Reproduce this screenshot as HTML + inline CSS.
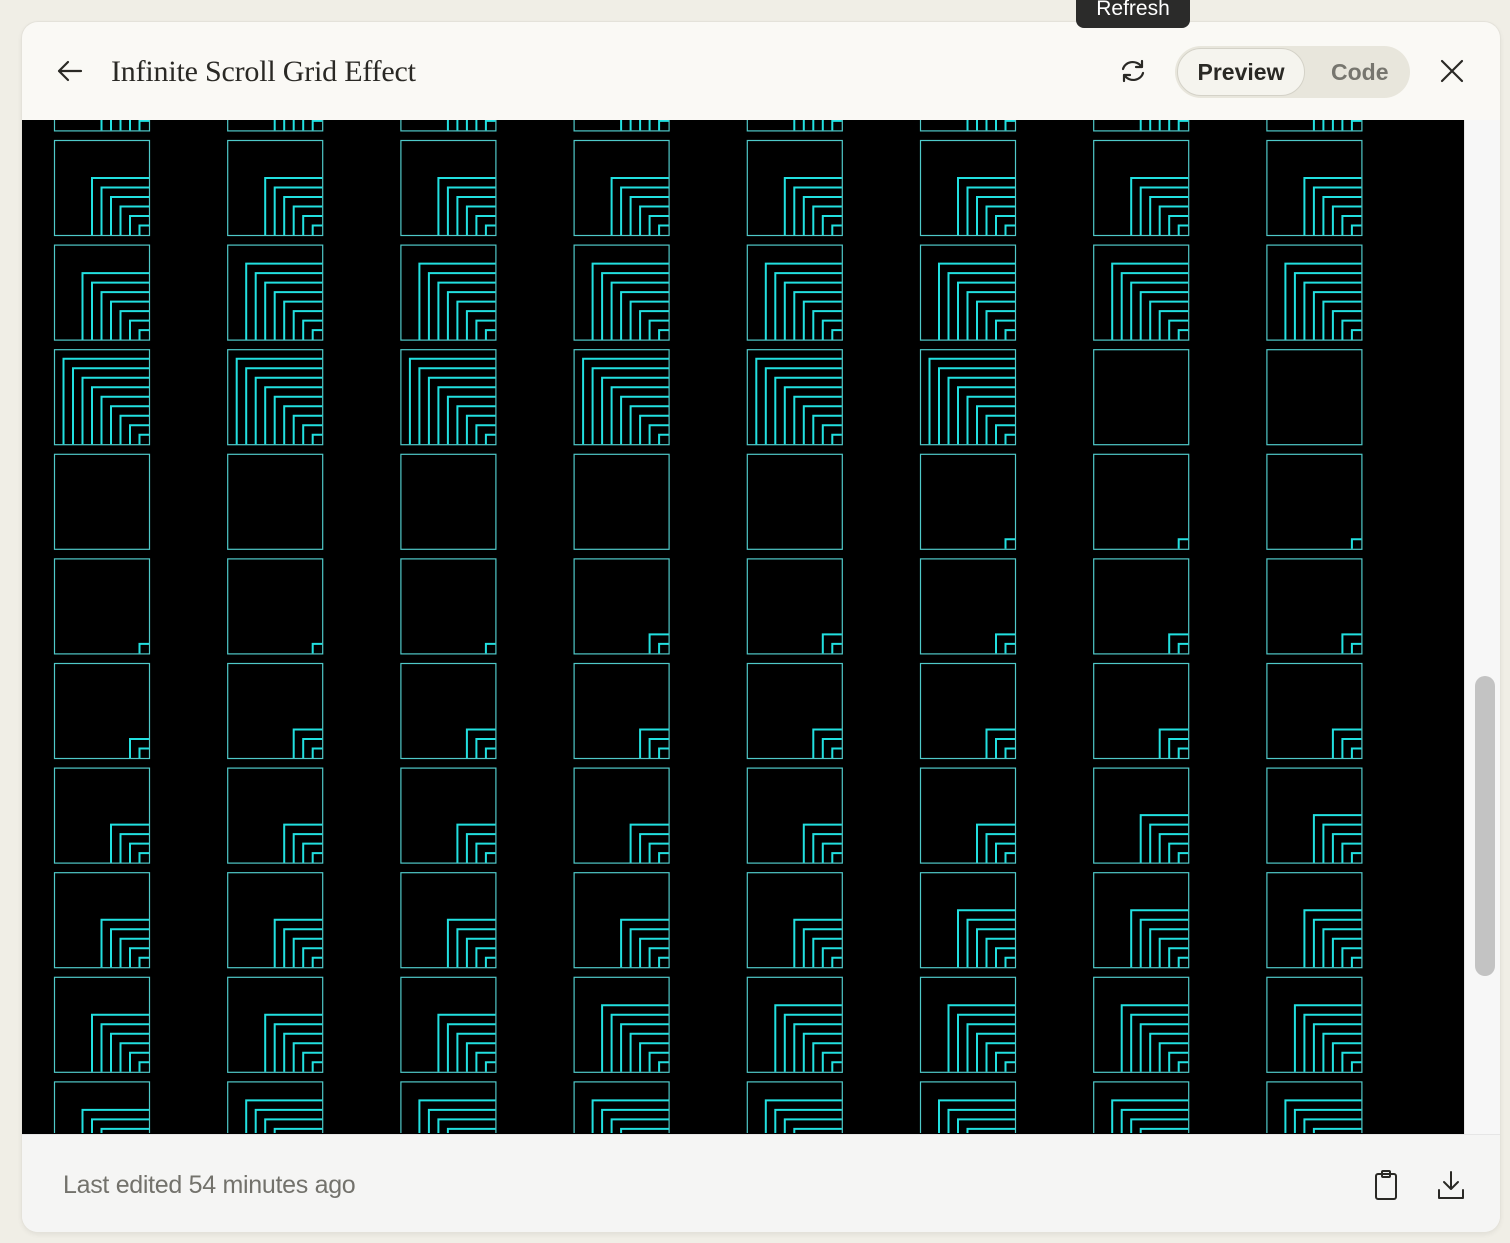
<!DOCTYPE html>
<html><head><meta charset="utf-8"><style>
*{box-sizing:border-box;margin:0;padding:0}
html,body{width:1510px;height:1243px;overflow:hidden;background:#f0eee6;font-family:"Liberation Sans",sans-serif}
.card{position:absolute;left:22px;top:22px;width:1478px;height:1210px;background:#faf9f5;border-radius:16px;box-shadow:0 0 0 1px #e4e2da,0 2px 6px rgba(0,0,0,.08);overflow:hidden}
.title{position:absolute;left:89px;top:33px;font-family:"Liberation Serif",serif;font-size:30px;color:#2a2925;letter-spacing:-0.2px}
.stage{position:absolute;left:0;top:98px;width:1442px;height:1014px;background:#000;overflow:hidden}
.sb{position:absolute;left:1442px;top:98px;width:36px;height:1014px;background:#f7f7f7;border-left:1px solid #e6e6e6}
.thumb{position:absolute;left:10px;top:556px;width:20px;height:300px;border-radius:10px;background:#c3c3c3}
.foot{position:absolute;left:0;top:1112px;width:1478px;height:98px;background:#f5f5f4;border-top:1px solid #e6e6e6}
.foot span{position:absolute;left:41px;top:36px;font-size:25px;color:#73726c;letter-spacing:-0.3px}
.tog{position:absolute;left:1153px;top:24px;width:235px;height:52px;border-radius:26px;background:#e8e6dc}
.pv{position:absolute;left:2px;top:2px;width:128px;height:48px;border-radius:24px;background:#f5f4ee;border:1px solid #d4d2c8;font-weight:bold;font-size:23px;color:#2a2925;text-align:center;line-height:46px}
.cd{position:absolute;left:156px;top:0;font-weight:bold;font-size:23px;color:#77766f;line-height:52px}
.tip{position:absolute;left:1076px;top:-10px;width:114px;height:38px;border-radius:8px;background:#2b2b2a;color:#fff;font-size:21px;text-align:center;line-height:30px;padding-top:4px}
svg{position:absolute}
</style></head><body>
<div class="card">
<svg style="left:33px;top:34px" width="30" height="30" viewBox="0 0 30 30"><path d="M26 15H4M13 6l-9 9 9 9" fill="none" stroke="#2a2925" stroke-width="2.2" stroke-linecap="round" stroke-linejoin="round"/></svg>
<div class="title">Infinite Scroll Grid Effect</div>
<svg style="left:1096px;top:34px" width="30" height="30" viewBox="0 0 30 30"><g fill="none" stroke="#2a2925" stroke-width="2.2" stroke-linecap="round" stroke-linejoin="round"><path d="M5 13a10 9 0 0 1 18-3M24 5v6h-6"/><path d="M25 17a10 9 0 0 1-18 3M6 25v-6h6"/></g></svg>
<div class="tog"><div class="pv">Preview</div><div class="cd">Code</div></div>
<svg style="left:1416px;top:35px" width="28" height="28" viewBox="0 0 28 28"><path d="M4 4l20 20M24 4L4 24" stroke="#2a2925" stroke-width="2.2" stroke-linecap="round"/></svg>
<div class="stage"><svg id="g" width="1442" height="1014" style="left:-1px;top:-1px"></svg></div>
<div class="sb"><div class="thumb"></div></div>
<div class="foot"><span>Last edited 54 minutes ago</span>
<svg style="left:1350px;top:34px" width="28" height="32" viewBox="0 0 28 32"><g fill="none" stroke="#2a2925" stroke-width="2"><rect x="4" y="5" width="20" height="25" rx="2"/><rect x="10" y="2" width="8" height="6" rx="1"/></g></svg>
<svg style="left:1414px;top:34px" width="30" height="32" viewBox="0 0 30 32"><g fill="none" stroke="#2a2925" stroke-width="2" stroke-linecap="round" stroke-linejoin="round"><path d="M15 3v17M8 13l7 7 7-7M3 21v8h24v-8"/></g></svg>
</div>
</div>
<div class="tip">Refresh</div>
<script>
var counts=[[5,5,5,5,5,5,5,5],[6,6,6,6,6,6,6,6],[7,8,8,8,8,8,8,8],[9,9,9,9,9,9,0,0],[0,0,0,0,0,1,1,1],[1,1,1,2,2,2,2,2],[2,3,3,3,3,3,3,3],[4,4,4,4,4,4,5,5],[5,5,5,5,5,6,6,6],[6,6,6,7,7,7,7,7],[7,8,8,8,8,8,8,8]];
var s='';
for(var r=0;r<11;r++){for(var c=0;c<8;c++){
var x=33+c*173.2, y=-83.6+r*104.6, w=95;
s+='<rect x="'+(x+.5)+'" y="'+(y+.5)+'" width="'+w+'" height="'+w+'" fill="none" stroke="#4fc9c9" stroke-width="1.2"/>';
var n=counts[r][c];
for(var k=1;k<=n;k++){var sz=k*9.5;var x1=x+w-sz,y1=y+w-sz;
s+='<path d="M'+x1+' '+(y+w)+'V'+y1+'H'+(x+w)+'" fill="none" stroke="#22e0e0" stroke-width="2"/>';}
}}
document.getElementById('g').innerHTML=s;
</script>
</body></html>
